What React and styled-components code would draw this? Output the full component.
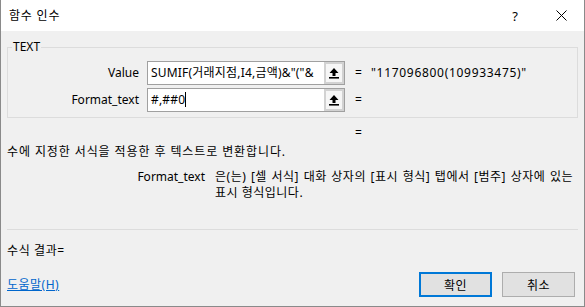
import React from "react";
import styled, { createGlobalStyle } from "styled-components";

const GlobalStyle = createGlobalStyle`
  html, body { margin: 0; padding: 0; background: #f0f0f0; }
  body {
    font-family: "Noto Sans", "Noto Sans CJK KR", sans-serif;
    font-size: 12px;
    color: #000;
  }
`;

const Window = styled.div`
  width: 585px;
  height: 307px;
  box-sizing: border-box;
  background: #f0f0f0;
  border: 1px solid #8a8a8a;
  border-top: none;
  display: flex;
  flex-direction: column;
  overflow: hidden;
`;

const TitleBar = styled.div`
  height: 31px;
  flex: none;
  background: #ffffff;
  display: flex;
  align-items: center;
  justify-content: space-between;
`;

const Title = styled.div`
  padding-left: 8px;
  font-size: 12px;
  line-height: 16px;
  letter-spacing: 0.8px;
`;

const TitleButtons = styled.div`
  display: flex;
  height: 100%;
`;

const TitleButton = styled.div`
  width: 46px;
  height: 100%;
  display: flex;
  align-items: center;
  justify-content: center;
  font-size: 13px;
`;

const Body = styled.div`
  flex: 1;
  display: flex;
  flex-direction: column;
  padding: 0 6px;
  min-height: 0;
`;

const ArgGroup = styled.fieldset`
  margin: 9px 0 0;
  padding: 7px 0 5px;
  border: 1px solid #dcdcdc;
  min-width: 0;
`;

const GroupLegend = styled.legend`
  margin-left: 4px;
  padding: 0 1px;
  font-size: 12px;
  line-height: 14px;
`;

const ArgRow = styled.div`
  display: flex;
  align-items: center;
  height: 24px;
  & + & {
    margin-top: 3px;
  }
`;

const ArgLabel = styled.div`
  width: 131px;
  text-align: right;
  line-height: 16px;
`;

const InputBox = styled.div`
  margin-left: 8px;
  width: 198px;
  height: 24px;
  box-sizing: border-box;
  border: 1px solid #a0a0a0;
  background: #ffffff;
  display: flex;
`;

const InputText = styled.div`
  flex: 1;
  min-width: 0;
  padding-left: 3px;
  overflow: hidden;
  white-space: nowrap;
  line-height: 22px;
  letter-spacing: 0.2px;
`;

const Caret = styled.span`
  display: inline-block;
  width: 1px;
  height: 15px;
  background: #000;
  vertical-align: -3px;
`;

const PickButton = styled.div`
  width: 20px;
  flex: none;
  box-sizing: border-box;
  border: 2px solid #d2d2d2;
  background: #f6f6f6;
  display: flex;
  align-items: center;
  justify-content: center;
`;

const Equals = styled.div`
  margin-left: 10px;
  width: 8px;
  line-height: 16px;
`;

const ArgValue = styled.div`
  margin-left: 8px;
  line-height: 16px;
  white-space: nowrap;
  letter-spacing: 0.7px;
`;

const ResultEq = styled.div`
  margin-top: 7px;
  padding-left: 348px;
  line-height: 16px;
`;

const Description = styled.div`
  margin-top: 3px;
  line-height: 16px;
  letter-spacing: 0.9px;
`;

const ArgHelp = styled.div`
  display: flex;
  margin-top: 9px;
  line-height: 16px;
`;

const ArgName = styled.div`
  width: 198px;
  flex: none;
  text-align: right;
`;

const ArgDesc = styled.div`
  margin-left: 10px;
  width: 358px;
  flex: none;
  letter-spacing: 0.5px;
`;

const DescLine = styled.span`
  display: block;
  text-align: ${(p) => (p.$fill ? "justify" : "left")};
  text-align-last: ${(p) => (p.$fill ? "justify" : "auto")};
`;

const BottomSection = styled.div`
  margin-top: auto;
  display: flex;
  flex-direction: column;
`;

const Separator = styled.div`
  height: 1px;
  background: #dcdcdc;
`;

const FormulaResult = styled.div`
  margin-top: 13px;
  line-height: 16px;
  letter-spacing: 0.6px;
`;

const Footer = styled.div`
  margin-top: 13px;
  margin-bottom: 9px;
  height: 25px;
  display: flex;
  align-items: center;
  justify-content: space-between;
`;

const HelpLink = styled.a`
  color: #0066cc;
  text-decoration: underline;
  line-height: 16px;
  letter-spacing: 0.5px;
  cursor: pointer;
`;

const ButtonGroup = styled.div`
  display: flex;
  gap: 10px;
  margin-right: 3px;
`;

const DialogButton = styled.button`
  width: 73px;
  height: 25px;
  box-sizing: border-box;
  margin: 0;
  padding: 0;
  background: #e1e1e1;
  border: ${(p) => (p.$primary ? "2px solid #0078d7" : "1px solid #adadad")};
  font-family: "Noto Sans", "Noto Sans CJK KR", sans-serif;
  font-size: 12px;
  letter-spacing: 0.5px;
  color: #000;
`;

const UpArrow = () => (
  <svg width="10" height="11" viewBox="0 0 10 11">
    <path d="M5 0 L9.5 5 H6.5 V8 H3.5 V5 H0.5 Z" fill="#000" />
    <rect x="0" y="9" width="10" height="1.6" fill="#000" />
  </svg>
);

const CloseIcon = () => (
  <svg width="11" height="11" viewBox="0 0 11 11">
    <path d="M0.5 0.5 L10.5 10.5 M10.5 0.5 L0.5 10.5" stroke="#000" strokeWidth="1" />
  </svg>
);

export default function App() {
  return (
    <>
      <GlobalStyle />
      <Window>
        <TitleBar>
          <Title>함수 인수</Title>
          <TitleButtons>
            <TitleButton>?</TitleButton>
            <TitleButton>
              <CloseIcon />
            </TitleButton>
          </TitleButtons>
        </TitleBar>
        <Body>
          <ArgGroup>
            <GroupLegend>TEXT</GroupLegend>
            <ArgRow>
              <ArgLabel>Value</ArgLabel>
              <InputBox>
                <InputText>SUMIF(거래지점,I4,금액)&amp;"("&amp;</InputText>
                <PickButton>
                  <UpArrow />
                </PickButton>
              </InputBox>
              <Equals>=</Equals>
              <ArgValue>"117096800(109933475)"</ArgValue>
            </ArgRow>
            <ArgRow>
              <ArgLabel>Format_text</ArgLabel>
              <InputBox>
                <InputText>
                  #,##0
                  <Caret />
                </InputText>
                <PickButton>
                  <UpArrow />
                </PickButton>
              </InputBox>
              <Equals>=</Equals>
            </ArgRow>
          </ArgGroup>
          <ResultEq>=</ResultEq>
          <Description>수에 지정한 서식을 적용한 후 텍스트로 변환합니다.</Description>
          <ArgHelp>
            <ArgName>Format_text</ArgName>
            <ArgDesc>
              <DescLine $fill>은(는) [셀 서식] 대화 상자의 [표시 형식] 탭에서 [범주] 상자에 있는</DescLine>
              <DescLine>표시 형식입니다.</DescLine>
            </ArgDesc>
          </ArgHelp>
          <BottomSection>
            <Separator />
            <FormulaResult>수식 결과=</FormulaResult>
            <Footer>
              <HelpLink>도움말(H)</HelpLink>
              <ButtonGroup>
                <DialogButton $primary>확인</DialogButton>
                <DialogButton>취소</DialogButton>
              </ButtonGroup>
            </Footer>
          </BottomSection>
        </Body>
      </Window>
    </>
  );
}
